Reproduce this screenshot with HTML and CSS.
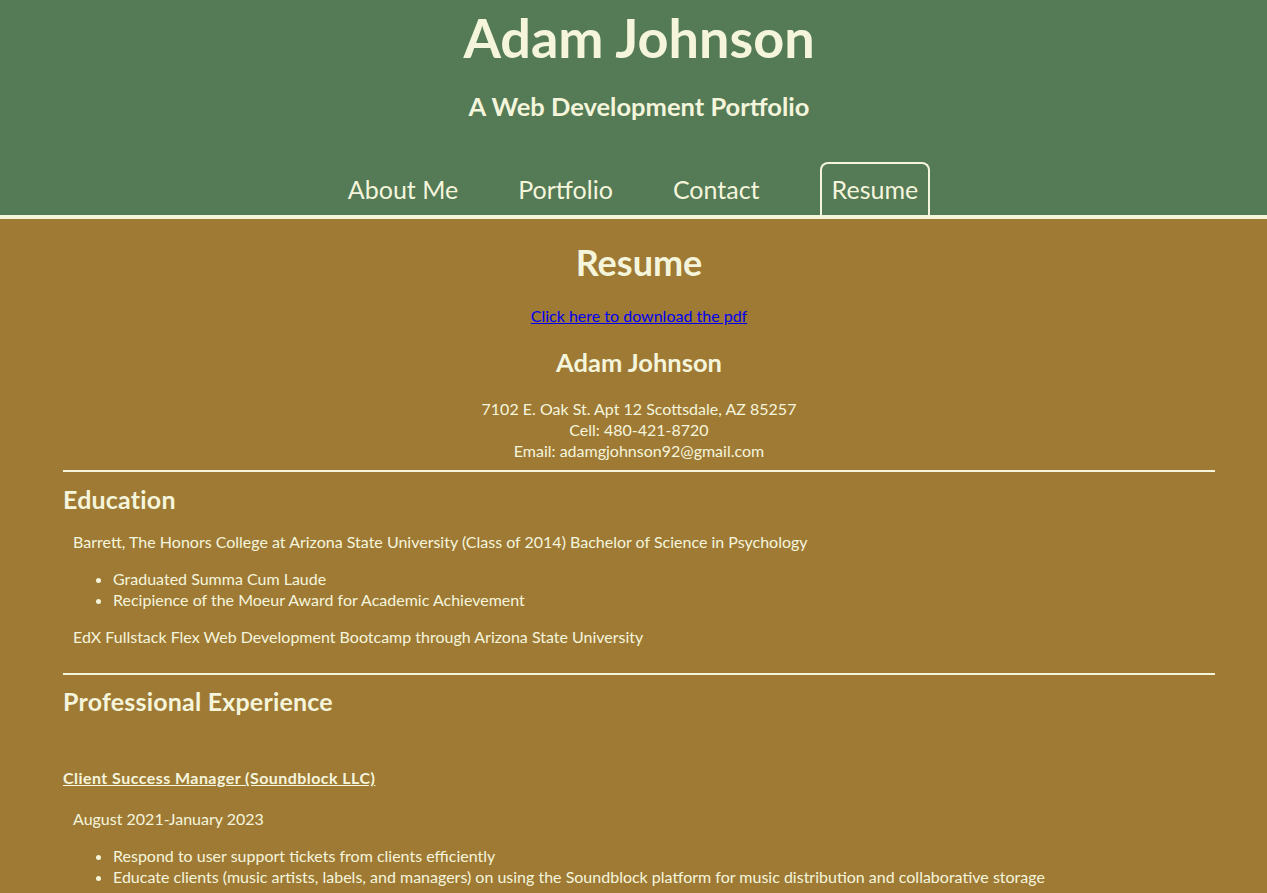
FILE: index.html
```html
<!DOCTYPE html>
<html lang="en">
<head>
<meta charset="utf-8">
<title>Adam Johnson - Resume</title>
<link rel="stylesheet" href="styles.css">
</head>
<body>
<header class="site-header">
  <h1 class="site-title">Adam Johnson</h1>
  <h2 class="site-subtitle">A Web Development Portfolio</h2>
  <nav class="site-nav">
    <a class="nav-link" href="#">About Me</a>
    <a class="nav-link" href="#">Portfolio</a>
    <a class="nav-link" href="#">Contact</a>
    <a class="nav-link active" href="#">Resume</a>
  </nav>
</header>
<main class="resume">
  <h2 class="resume-title">Resume</h2>
  <p class="download"><a href="#">Click here to download the pdf</a></p>
  <h3 class="resume-name">Adam Johnson</h3>
  <p class="contact">7102 E. Oak St. Apt 12 Scottsdale, AZ 85257<br>Cell: 480-421-8720<br>Email: adamgjohnson92@gmail.com</p>
  <hr class="divider">
  <h2 class="section-title">Education</h2>
  <p class="entry">Barrett, The Honors College at Arizona State University (Class of 2014) Bachelor of Science in Psychology</p>
  <ul class="points">
    <li>Graduated Summa Cum Laude</li>
    <li>Recipience of the Moeur Award for Academic Achievement</li>
  </ul>
  <p class="entry">EdX Fullstack Flex Web Development Bootcamp through Arizona State University</p>
  <hr class="divider divider-lower">
  <h2 class="section-title section-lower">Professional Experience</h2>
  <h4 class="job-title">Client Success Manager (Soundblock LLC)</h4>
  <p class="entry dates">August 2021-January 2023</p>
  <ul class="points">
    <li>Respond to user support tickets from clients efficiently</li>
    <li>Educate clients (music artists, labels, and managers) on using the Soundblock platform for music distribution and collaborative storage</li>
    <li>Facilitate distribution of client music releases to streaming platforms and digital retailers</li>
  </ul>
</main>
</body>
</html>
```

FILE: styles.css
```css
html, body {
  margin: 0;
  padding: 0;
}

body {
  background: #9e7a35;
  color: #f5f5dc;
  font-family: "Lato", "Liberation Sans", sans-serif;
  font-size: 16px;
  line-height: 21px;
}

.site-header {
  background: #547a56;
  border-bottom: 4px solid #f5f5dc;
  padding: 0 52px 0 63px;
  text-align: center;
}

.site-title {
  margin: 0;
  padding-top: 6px;
  font-size: 54px;
  line-height: 64px;
  font-weight: 700;
}

.site-subtitle {
  margin: 21px 0 0;
  font-size: 25.5px;
  line-height: 30px;
  font-weight: 700;
}

.site-nav {
  display: flex;
  justify-content: center;
  align-items: flex-end;
  gap: 60px;
  margin-top: 41px;
}

.nav-link {
  color: #f5f5dc;
  text-decoration: none;
  font-size: 25px;
  line-height: 30px;
  padding: 12px 0 11px;
}

.nav-link.active {
  padding: 10px 10px 11px;
  border: 2px solid #f5f5dc;
  border-bottom: none;
  border-radius: 8px 8px 0 0;
}

.resume {
  padding: 0 52px 40px 63px;
}

.resume-title {
  text-align: center;
  margin: 21px 0 0;
  font-size: 36px;
  line-height: 44px;
}

.download {
  text-align: center;
  margin: 21px 0 0;
}

.download a {
  color: #0000ee;
}

.resume-name {
  text-align: center;
  margin: 21px 0 0;
  font-size: 25.5px;
  line-height: 30px;
}

.contact {
  text-align: center;
  margin: 21px 0 0;
}

.divider {
  border: none;
  border-top: 2px solid #f5f5dc;
  margin: 9px 0 0;
  height: 0;
}

.section-title {
  margin: 12px 0 0;
  font-size: 25px;
  line-height: 30px;
  letter-spacing: 0.2px;
}

.entry {
  margin: 17px 0 0;
  padding-left: 10px;
}

.points {
  margin: 16px 0 0;
  padding-left: 50px;
}

.points + .entry {
  margin-top: 16px;
}

.divider-lower {
  margin-top: 26px;
}

.section-lower {
  margin-top: 11px;
}

.job-title {
  margin: 51px 0 0;
  font-size: 16px;
  line-height: 21px;
  letter-spacing: 0.45px;
  text-decoration: underline;
}

.dates {
  margin-top: 20px;
}
```
